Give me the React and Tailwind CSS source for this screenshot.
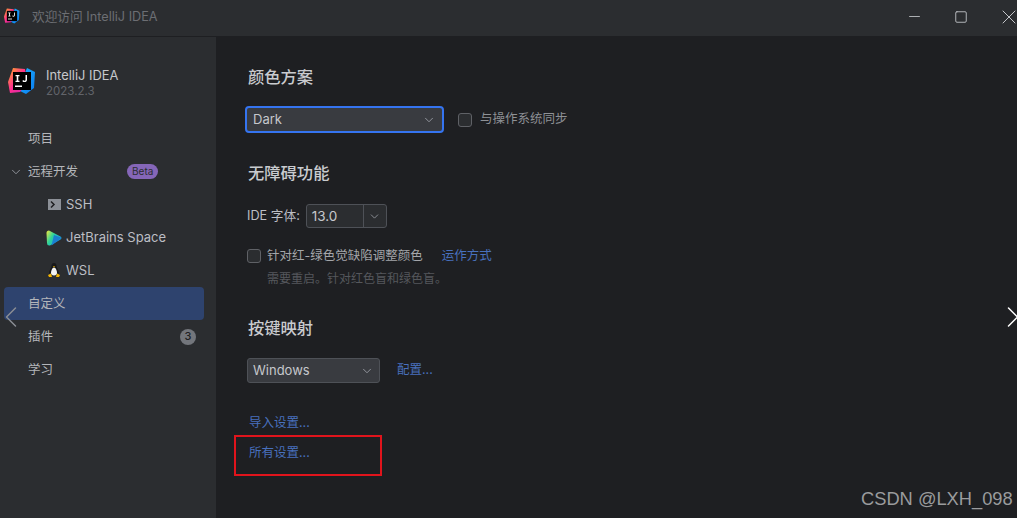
import { ChevronDown, ChevronLeft, ChevronRight, X, Minus, Square } from 'lucide-react'

const font = "font-['Inter','Noto_Sans_CJK_SC',sans-serif]"

function IdeaLogo({ size }) {
  return (
    <svg width={size} height={size} viewBox="0 0 28 28">
      <defs>
        <linearGradient id="ij-a" x1="0" y1="0" x2="1" y2="1">
          <stop offset="0" stopColor="#ffb01f" />
          <stop offset="0.5" stopColor="#ff2d90" />
          <stop offset="1" stopColor="#c92cb5" />
        </linearGradient>
        <linearGradient id="ij-b" x1="0" y1="0" x2="1" y2="1">
          <stop offset="0" stopColor="#1fb6ff" />
          <stop offset="1" stopColor="#0a7bf0" />
        </linearGradient>
      </defs>
      <path d="M19 1l8 4-1 16-8 6-8-4z" fill="url(#ij-b)" />
      <path d="M5 1l12 1 2 14-7 9-10 1-2-11z" fill="url(#ij-a)" />
      <rect x="5" y="5" width="18" height="18" fill="#000" />
      <rect x="7" y="18.5" width="7" height="1.5" fill="#fff" />
      <path d="M7.5 8h4v1.3h-1.2v4.4h1.2V15h-4v-1.3h1.2V9.3H7.5zM17.500 8H19v4.800c0 1.500-1 2.300-2.400 2.300-1 0-1.800-.4-2.300-1.200l1-.9c.3.4.7.7 1.200.7.6 0 1-.3 1-1z" fill="#fff" />
    </svg>
  )
}

function SpaceLogo() {
  return (
    <svg width="16" height="16" viewBox="0 0 16 16">
      <defs>
        <linearGradient id="space-a" x1="0" y1="0" x2="1" y2="0.6">
          <stop offset="0" stopColor="#f6e93a" />
          <stop offset="0.45" stopColor="#2fd39a" />
          <stop offset="1" stopColor="#16a3e6" />
        </linearGradient>
      </defs>
      <path d="M3 .5L14.500 6.500Q16.500 8 14.500 9.500L4 15.500Q1 16 1 13L.5 3Q.5.5 3 .5z" fill="url(#space-a)" />
      <path d="M8 5l7 2.500v1L5.500 15.500z" fill="#1b7fd0" />
    </svg>
  )
}

function Tux() {
  return (
    <svg width="14" height="15" viewBox="0 0 14 15">
      <path d="M7 0c2 0 2.600 1.600 2.600 3.500 0 1.500 2.400 4 2.400 7H2c0-3 2.400-5.500 2.400-7C4.400 1.600 5 0 7 0z" fill="#17181a" />
      <path d="M7 4.500c1.500 0 3 3 3 5.500 0 1.500-1.200 2.500-3 2.500S4 11.500 4 10c0-2.500 1.500-5.500 3-5.500z" fill="#f2f2f2" />
      <path d="M5.800 3.200h2.400L7 4.600z" fill="#f4b400" />
      <path d="M1 12l3-1.500 1 3.500H2zM13 12l-3-1.500-1 3.500h3z" fill="#f4b400" />
    </svg>
  )
}

function NavItem({ children, selected }) {
  return (
    <div className={`h-[33px] mx-1 w-[200px] flex items-center pl-6 pt-[2px] rounded text-[12.5px] text-[#b4b6ba] ${selected ? 'bg-[#2e436e]' : ''}`}>
      {children}
    </div>
  )
}

function SubItem({ icon, label }) {
  return (
    <div className="h-[33px] flex items-center text-[13px] text-[#bcbec4]">
      <div className="w-[16px] ml-[46px] flex justify-center">{icon}</div>
      <span className="ml-[4px]">{label}</span>
    </div>
  )
}

function Checkbox() {
  return <div className="w-[14px] h-[14px] rounded-[3px] border border-[#5f6166] bg-[#2b2d30]" />
}

function Heading({ children, className }) {
  return <h2 className={`ml-[1px] text-[16.3px] leading-[20px] font-medium text-[#c9cbcf] ${className}`}>{children}</h2>
}

export default function App() {
  return (
    <div className={`relative w-[1017px] h-[518px] overflow-hidden flex flex-col bg-[#1e1f22] ${font}`}>
      {/* Title bar */}
      <div className="h-[37px] shrink-0 flex items-center bg-[#2b2d30] border-b border-[#1e1f22]">
        <div className="ml-[4px] -mt-[4px]"><IdeaLogo size={16} /></div>
        <span className="ml-[12px] -mt-[3px] text-[12.7px] text-[#6c6e73]">欢迎访问 IntelliJ IDEA</span>
        <div className="ml-auto -mt-[3px] flex items-center text-[#c4c6ca]">
          <Minus className="w-[17px] h-[17px] mr-[31px]" strokeWidth={1.2} />
          <Square className="w-[14px] h-[14px] mr-[29px]" strokeWidth={1.5} />
          <X className="w-[24px] h-[24px] mr-[-4px]" strokeWidth={1} />
        </div>
      </div>

      <div className="flex flex-1 min-h-0">
        {/* Sidebar */}
        <div className="w-[216px] shrink-0 bg-[#2b2d30] pt-[24px]">
          <div className="flex items-center pl-[8px] h-[40px] mb-[21px]">
            <IdeaLogo size={28} />
            <div className="ml-[10px] mt-[3px]">
              <div className="text-[12.9px] leading-[17px] text-[#c6c8cc]">IntelliJ IDEA</div>
              <div className="text-[11.5px] leading-[15px] text-[#62646a]">2023.2.3</div>
            </div>
          </div>
          <NavItem>项目</NavItem>
          <div className="h-[33px] mx-1 flex items-center text-[12.5px] text-[#b4b6ba] relative">
            <ChevronDown className="absolute left-[5px] w-[14px] h-[14px] text-[#9da0a8]" strokeWidth={1.5} />
            <span className="ml-6 mt-[2px]">远程开发</span>
            <span className="ml-[49px] h-[15px] px-[5px] rounded-full bg-[#8566b8] text-[10px] leading-[15px] text-[#2b2d30]">Beta</span>
          </div>
          <SubItem
            icon={
              <svg width="13" height="11" viewBox="0 0 13 11">
                <rect width="13" height="11" fill="#8c9097" />
                <path d="M3 2.500L6 5.500 3 8.500" fill="none" stroke="#1e1f22" strokeWidth="1.500" />
              </svg>
            }
            label="SSH"
          />
          <SubItem icon={<SpaceLogo />} label="JetBrains Space" />
          <SubItem icon={<Tux />} label="WSL" />
          <NavItem selected>自定义</NavItem>
          <div className="h-[33px] mx-1 w-[200px] flex items-center justify-between pl-6 pr-[8px] text-[12.5px] text-[#b4b6ba]">
            <span className="mt-[2px]">插件</span>
            <span className="w-[16px] h-[16px] rounded-full bg-[#73767c] text-[#1e1f22] text-[11px] font-medium flex items-center justify-center">3</span>
          </div>
          <NavItem>学习</NavItem>
        </div>

        {/* Main panel */}
        <div className="flex-1 pl-[31px] pt-[30px] text-[12.5px] text-[#bcbec4]">
          <Heading>颜色方案</Heading>

          <div className="mt-[19px] flex items-center">
            <div className="-ml-[2px] w-[199px] h-[27px] px-[6px] flex items-center justify-between rounded-[4px] border-2 border-[#3574f0] bg-[#393b40] text-[13px] text-[#c6c8cc]">
              Dark
              <ChevronDown className="w-[14px] h-[14px] text-[#9da0a8]" strokeWidth={1.5} />
            </div>
            <div className="ml-[14px]"><Checkbox /></div>
            <span className="ml-[8px] text-[#8e9196]">与操作系统同步</span>
          </div>

          <Heading className="mt-[30px]">无障碍功能</Heading>

          <div className="mt-[21px] flex items-center">
            <span className="text-[12.7px]">IDE 字体:</span>
            <div className="ml-[6px] w-[81px] h-[24px] flex items-center rounded-[3px] border border-[#4e5157] bg-[#2b2d30] text-[13.5px] text-[#c6c8cc]">
              <span className="flex-1 pl-[5px]">13.0</span>
              <div className="w-[23px] h-full border-l border-[#4e5157] flex items-center justify-center">
                <ChevronDown className="w-[13px] h-[13px] text-[#9da0a8]" strokeWidth={1.5} />
              </div>
            </div>
          </div>

          <div className="mt-[18px] flex items-center h-[20px]">
            <Checkbox />
            <span className="ml-[6px] text-[#a4a6aa]">针对红-绿色觉缺陷调整颜色</span>
            <span className="ml-[19px] text-[#4870bd]">运作方式</span>
          </div>
          <div className="mt-[5px] ml-[20px] text-[12px] leading-[16px] text-[#55575c]">需要重启。针对红色盲和绿色盲。</div>

          <Heading className="mt-[31px]">按键映射</Heading>

          <div className="mt-[20px] flex items-center">
            <div className="w-[133px] h-[25px] px-[5px] flex items-center justify-between rounded-[3px] border border-[#4e5157] bg-[#393b40] text-[13px] text-[#c6c8cc]">
              Windows
              <ChevronDown className="w-[14px] h-[14px] text-[#9da0a8]" strokeWidth={1.5} />
            </div>
            <span className="ml-[17px] text-[#4870bd]">配置...</span>
          </div>

          <div className="mt-[31px] ml-[2px] leading-[18px] text-[#4870bd]">导入设置...</div>
          <div className="mt-[12px] ml-[2px] leading-[18px] text-[#4870bd]">所有设置...</div>
        </div>
      </div>

      {/* Carousel arrows, annotation and watermark sit over the window */}
      <ChevronLeft className="absolute left-[-7px] top-[299px] w-[36px] h-[36px] text-[#8a8d93]" strokeWidth={1} />
      <ChevronRight className="absolute left-[995px] top-[299px] w-[36px] h-[36px] text-white" strokeWidth={1} />
      <div className="absolute left-[234px] top-[435px] w-[148px] h-[41px] border-2 border-[#e0141c]" />
      <div className="absolute left-[861px] top-[489px] text-[18.3px] leading-[20px] text-[#9a9b9d] font-['Liberation_Sans',sans-serif]">CSDN @LXH_098</div>
    </div>
  )
}
